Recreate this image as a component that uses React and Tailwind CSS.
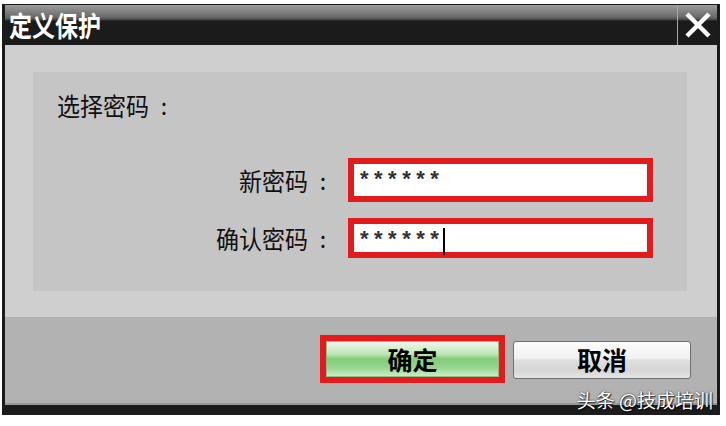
const cjk = { fontFamily: '"Noto Sans CJK SC", "Noto Sans", sans-serif' }

function Label({ text }) {
  return (
    <div className="flex items-center justify-end text-[23px] leading-[28px] text-[#111]">
      <span className="scale-y-[1.08]">{text}</span>
      <span className="ml-[11px] inline-block w-[8px] text-center">:</span>
    </div>
  )
}

function PasswordBox({ height, cursor }) {
  return (
    <div className={`w-[305px] ${height} border-[6px] border-[#e41b1d] bg-white pl-[6px] pt-[2px] flex items-start`}>
      <span className="font-['Liberation_Sans',sans-serif] font-bold text-[22px] leading-[26px] tracking-[5.5px] text-[#333]">******</span>
      {cursor && <span className="mt-[2px] -ml-[1px] inline-block w-[2px] h-[27px] bg-black" />}
    </div>
  )
}

export default function App() {
  return (
    <div className="relative w-[726px] h-[426px] overflow-hidden bg-white pt-[4px] pl-[2px]" style={cjk}>
      <div className="w-[718px] border-x-[3px] border-t border-[#1a1a1a] flex flex-col">
        {/* title bar */}
        <div className="flex h-[40px] bg-[linear-gradient(to_bottom,#9c9c9c_0%,#6a6a6a_30%,#4c4c4c_36%,#1b1b1b_40%,#1b1b1b_100%)]">
          <div className="flex-1 flex items-center pl-[4px]">
            <span className="text-white font-bold text-[23px] leading-none scale-y-[1.22] origin-center">定义保护</span>
          </div>
          <div className="w-[40px] border-l border-[#a8a8a8] flex items-center justify-center">
            <svg width="28" height="26" viewBox="0 0 28 26">
              <path d="M3 2 L25 24 M25 2 L3 24" stroke="white" strokeWidth="4.5" strokeLinecap="butt" />
            </svg>
          </div>
        </div>

        {/* body */}
        <div className="h-[272px] bg-[#cfcfcf] pt-[27px] pl-[28px]">
          <div className="w-[654px] h-[219px] bg-[#c5c5c5] pt-[19px]">
            <div className="pl-[24px] flex">
              <Label text="选择密码" />
            </div>
            <div className="mt-[39px] flex items-center">
              <div className="w-[294px]">
                <Label text="新密码" />
              </div>
              <div className="ml-[21px]">
                <PasswordBox height="h-[44px]" />
              </div>
            </div>
            <div className="mt-[16px] flex items-center">
              <div className="w-[294px]">
                <Label text="确认密码" />
              </div>
              <div className="ml-[21px]">
                <PasswordBox height="h-[40px]" cursor />
              </div>
            </div>
          </div>
        </div>

        {/* footer */}
        <div className="h-[88px] bg-[#b2b2b2] border-b-2 border-[#999] flex items-start justify-end pt-[18px] pr-[26px] gap-[8px]">
          <div className="flex items-center h-[48px]">
            <div className="w-[185px] h-[48px] border-[6px] border-[#e41b1d]">
              <div className="w-full h-full border border-[#8fbf88] bg-[linear-gradient(to_bottom,#eef8ec_0%,#bfe6b8_35%,#82cd7a_50%,#95d68d_75%,#c9eec3_100%)] flex items-center justify-center">
                <span className="font-bold text-[25px] leading-none text-black">确定</span>
              </div>
            </div>
          </div>
          <div className="flex items-center h-[48px]">
            <div className="w-[178px] h-[38px] mt-[1px] rounded-[3px] border border-[#6e6e6e] bg-[linear-gradient(to_bottom,#fcfcfc_0%,#f1f1f1_45%,#dedede_52%,#d6d6d6_80%,#e6e6e6_100%)] flex items-center justify-center">
              <span className="font-bold text-[25px] leading-none text-black">取消</span>
            </div>
          </div>
        </div>
        <div className="h-[10px] bg-[#1c1c1c]" />
      </div>

      {/* watermark */}
      <div className="absolute right-[13px] top-[388px] text-[19px] leading-[24px] text-white [text-shadow:0_0_2px_rgba(0,0,0,0.8),1px_1px_1px_rgba(0,0,0,0.7)]">
        头条 @技成培训
      </div>
    </div>
  )
}
